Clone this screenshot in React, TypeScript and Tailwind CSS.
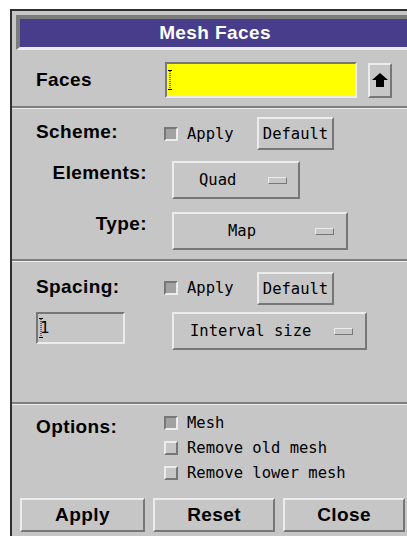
const raised = 'border-2 border-t-[#ececec] border-l-[#ececec] border-r-[#777777] border-b-[#777777]'
const sunken = 'border-2 border-t-[#777777] border-l-[#777777] border-r-[#ececec] border-b-[#ececec]'
const label = "font-['Liberation_Sans',Arial,sans-serif] font-bold text-[19px] tracking-[0.4px] leading-[20px] text-black"
const mono = "font-['DejaVu_Sans_Mono','Liberation_Mono',monospace] text-[15.5px] leading-[18px] text-black"

function Separator({ className = '' }: { className?: string }) {
  return <div className={`h-[3px] border-t-2 border-t-[#7e7e7e] border-b border-b-[#ececec] ${className}`} />
}

function Caret() {
  return (
    <svg width="5" height="20" viewBox="0 0 5 20" className="shrink-0">
      <path d="M0 0.5h4M0 19.5h4" stroke="#000" strokeWidth="1" />
      <path d="M2 1v18" stroke="#000" strokeWidth="1" strokeDasharray="1 1" />
    </svg>
  )
}

function Toggle({ on, dim, text }: { on?: boolean; dim?: boolean; text: string }) {
  return (
    <div className="flex items-center h-[25px]">
      <div className={`w-[14px] h-[14px] ${on ? `${sunken} bg-[#a2a2a2]` : `${raised} bg-[#c6c6c6]`}`} />
      <span className={`${mono} ml-[9px] ${dim ? 'text-[#9a9a9a]' : ''}`}>{text}</span>
    </div>
  )
}

function OptionMenu({ text, width, padLeft, padRight }: { text: string; width: string; padLeft: string; padRight: string }) {
  return (
    <div className={`${raised} ${width} h-[38px] flex items-center ${padLeft} ${padRight} bg-[#c6c6c6]`}>
      <span className={mono}>{text}</span>
      <div className={`ml-auto w-[19px] h-[7px] ${raised} bg-[#c6c6c6] border-[1.5px]`} />
    </div>
  )
}

function DefaultButton() {
  return (
    <div className={`${raised} w-[77px] h-[33px] flex items-center justify-center`}>
      <span className={mono}>Default</span>
    </div>
  )
}

function ActionButton({ text, width }: { text: string; width: string }) {
  return (
    <div className={`${raised} ${width} h-[34px] flex items-center justify-center`}>
      <span className={label}>{text}</span>
    </div>
  )
}

export default function App() {
  return (
    <div className="w-[407px] h-[536px] bg-white overflow-hidden pt-[9px] pl-[10px]">
      <div className="w-[402px] h-[540px] border-2 border-[#2f2f2f] bg-[#c6c6c6] flex flex-col">
        {/* title bar */}
        <div className="mt-[4px] ml-[4px] w-[394px] border-t-4 border-l-4 border-t-[#7b7b7b] border-l-[#7b7b7b] border-b-[3px] border-b-[#ececec]">
          <div className="h-[28px] bg-[#483d8b] flex items-center justify-center">
            <span className="font-['Liberation_Sans',Arial,sans-serif] font-bold text-[19px] tracking-[0.4px] text-white leading-[20px]">Mesh Faces</span>
          </div>
        </div>

        {/* faces picker */}
        <div className="mt-[12px] h-[36px] flex items-center">
          <div className="w-[153px] pl-[24px]">
            <span className={label}>Faces</span>
          </div>
          <div className={`${sunken} w-[192px] h-[36px] bg-[#ffff00] flex items-center pl-[1px]`}>
            <Caret />
          </div>
          <div className={`${raised} ml-[11px] w-[24px] h-[35px] flex items-center justify-center`}>
            <svg width="16" height="14" viewBox="0 0 16 14">
              <polygon points="8,0 16,7 12,7 12,14 4,14 4,7 0,7" fill="#000" />
            </svg>
          </div>
        </div>

        <Separator className="mt-[8px]" />

        {/* meshing scheme */}
        <div className="mt-[8px] flex items-start">
          <div className="w-[152px] pl-[24px] mt-[3px]">
            <span className={label}>Scheme:</span>
          </div>
          <div className="w-[93px] mt-[4px]">
            <Toggle on text="Apply" />
          </div>
          <DefaultButton />
        </div>
        <div className="mt-[11px] flex items-start">
          <div className="w-[135px] text-right">
            <span className={label}>Elements:</span>
          </div>
          <div className="ml-[25px]">
            <OptionMenu text="Quad" width="w-[128px]" padLeft="pl-[25px]" padRight="pr-[11px]" />
          </div>
        </div>
        <div className="mt-[13px] flex items-start">
          <div className="w-[135px] text-right">
            <span className={label}>Type:</span>
          </div>
          <div className="ml-[25px]">
            <OptionMenu text="Map" width="w-[176px]" padLeft="pl-[54px]" padRight="pr-[12px]" />
          </div>
        </div>

        <Separator className="mt-[9px]" />

        {/* interval spacing */}
        <div className="mt-[10px] flex items-start">
          <div className="w-[152px] pl-[24px] mt-[3px]">
            <span className={label}>Spacing:</span>
          </div>
          <div className="w-[93px] mt-[3px]">
            <Toggle on text="Apply" />
          </div>
          <DefaultButton />
        </div>
        <div className="mt-[7px] flex items-start">
          <div className={`${sunken} ml-[24px] w-[89px] h-[32px] flex items-center pl-[1px]`}>
            <Caret />
            <span className={`${mono} -ml-[4px]`}>1</span>
          </div>
          <div className="ml-[47px]">
            <OptionMenu text="Interval size" width="w-[195px]" padLeft="pl-[16px]" padRight="pr-[12px]" />
          </div>
        </div>

        <Separator className="mt-[52px]" />

        {/* mesh options */}
        <div className="mt-[5px] flex items-start">
          <div className="w-[152px] pl-[24px] mt-[5px]">
            <span className={label}>Options:</span>
          </div>
          <div className="flex flex-col">
            <Toggle on text="Mesh" />
            <Toggle text="Remove old mesh" />
            <Toggle dim text="Remove lower mesh" />
          </div>
        </div>

        <div className="mt-[13px] ml-[8px] flex gap-[8px]">
          <ActionButton text="Apply" width="w-[125px]" />
          <ActionButton text="Reset" width="w-[122px]" />
          <ActionButton text="Close" width="w-[122px]" />
        </div>
      </div>
    </div>
  )
}
